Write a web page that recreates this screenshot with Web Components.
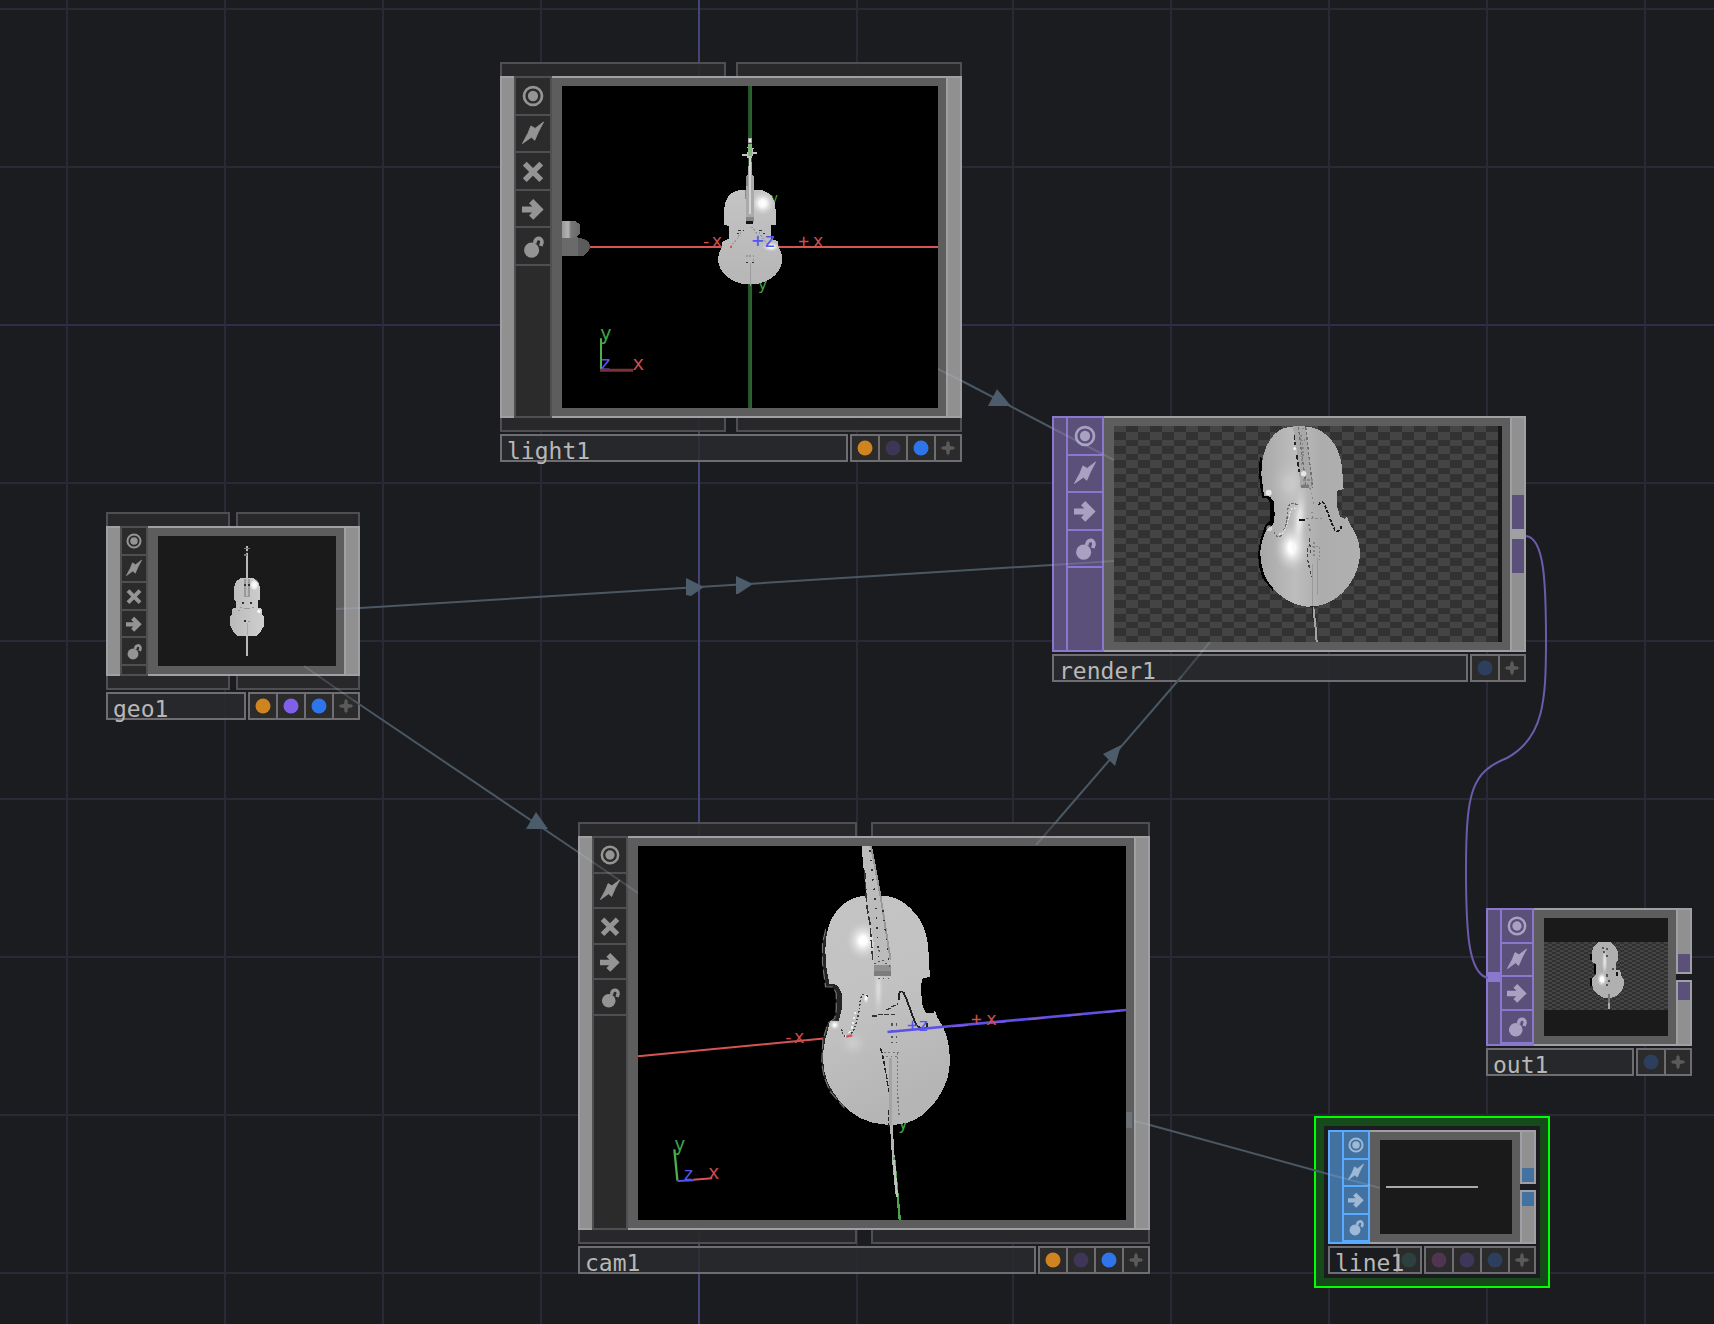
<!DOCTYPE html>
<html lang="en">
<head>
<meta charset="utf-8">
<title>Network editor</title>
<style>
html,body{margin:0;height:100%;background:#1b1c20}
body{font-family:"DejaVu Sans Mono","Liberation Mono",monospace;overflow:hidden}
</style>
</head>
<body>
<network-canvas>
  <op-node name="light1" kind="comp" tools="target bolt cross arrow lock" flags="#cf8420 #3f3556 #2e74ea" style="left:500px;top:62px;width:462px;--view-h:322px;--tool-w:34px;--tools-h:188px;--icon:22px;--gap:10px">
    <view-light></view-light>
  </op-node>
  <op-node name="geo1" kind="comp" tools="target bolt cross arrow lock" flags="#cf8420 #8060e8 #2e74ea" style="left:106px;top:512px;width:254px;--view-h:130px;--tool-w:24px;--tools-h:138px;--icon:16px;--gap:6px;--lead:4px">
    <view-geo></view-geo>
  </op-node>
  <op-node name="render1" kind="top" ports="joined" tools="target bolt arrow lock" flags="#2e3f5e" style="left:1052px;top:416px;width:474px;--view-h:216px;--tool-w:34px;--tools-h:150px;--icon:22px;--port:34px">
    <view-render></view-render>
  </op-node>
  <op-node name="cam1" kind="comp" tools="target bolt cross arrow lock" flags="#cf8420 #3f3556 #2e74ea" style="left:578px;top:822px;width:572px;--view-h:374px;--tool-w:32px;--tools-h:178px;--icon:20px;--gap:14px;--lead:2px">
    <view-cam></view-cam>
  </op-node>
  <op-node name="out1" kind="top" ports="split" input tools="target bolt arrow lock" flags="#2e3f5e" style="left:1486px;top:908px;width:206px;--view-h:118px;--tool-w:30px;--tools-h:134px;--icon:20px;--port:18px">
    <view-out></view-out>
  </op-node>
  <op-node name="line1" kind="sop" ports="split" selected tools="target bolt arrow lock" flags="#2c4040 #4f3550 #3f3759 #2e3f5e" style="left:1328px;top:1130px;width:208px;--view-h:94px;--tool-w:24px;--tools-h:110px;--icon:16px;--port:14px">
    <view-line></view-line>
  </op-node>
</network-canvas>

<script>
class NetworkCanvas extends HTMLElement {
  constructor() {
    super();
    const xs = [66,224,382,540,856,1012,1170,1328,1486,1644];
    const ys = [8,166,482,640,798,956,1114,1272];
    const grid = xs.map(x => `<rect x="${x}" y="0" width="2" height="100%"/>`).join('') +
      ys.map(y => `<rect x="0" y="${y}" width="100%" height="2"/>`).join('');
    this.attachShadow({mode:'open'}).innerHTML = `
    <style>
      :host{display:block;position:relative;min-height:100vh;background:#1b1c20;overflow:hidden}
      svg{position:absolute;inset:0;width:100%;height:100%;display:block;pointer-events:none}
    </style>
    <svg aria-hidden="true"><g fill="#292a35">${grid}</g>
      <rect x="0" y="324" width="100%" height="2" fill="#2c2e4c"/>
      <rect x="698" y="0" width="2" height="100%" fill="#444478"/></svg>
    <slot></slot>
    <svg aria-hidden="true">
      <g stroke="#4a5864" stroke-width="2" fill="none">
        <path d="M962 381L1052 428M360 608L1052 565M353 700L578 852M1056 822L1182 676M1150 1125L1328 1174"/>
      </g>
      <g stroke="#b4c8dc" stroke-opacity=".2" stroke-width="2" fill="none">
        <path d="M938 369L962 381M1052 428L1114 460M336 609L360 608M1052 565L1114 561M304 666L353 700M578 852L638 893M1036 845L1056 822M1182 676L1210 642M1134 1121L1150 1125M1328 1174L1380 1188"/>
      </g>
      <path d="M1126 1112h6v16h-6z" fill="#6c7276"/>
      <g fill="#4d5c6a">
        <path d="M997 389L1011 406H988Z"/><path d="M686 578L704 587L691 596L686 595Z"/>
        <path d="M736 576L753 584L738 594H736Z"/><path d="M536 812L548 829H526Z"/>
        <path d="M1121 745L1103 754L1115 766Z"/>
      </g>
      <path d="M1526 536C1544 538 1546 580 1546 640C1546 700 1544 738 1507 758C1472 772 1466 790 1466 870C1466 930 1468 974 1488 978" fill="none" stroke="#6c5bab" stroke-width="2"/>
    </svg>`;
  }
}

const ICONS = {
  target:'<circle cx="12" cy="12" r="9.8" fill="none" stroke="currentColor" stroke-width="3"/><circle cx="12" cy="12" r="5.6" fill="currentColor"/>',
  bolt:'<path fill="currentColor" stroke="currentColor" d="M23.500 0L14.300 7L9.700 4.300L6.500 12.300L.500 23.500L10.300 16.500L13.900 19.900L18 10.500Z"/>',
  cross:'<path fill="none" stroke="currentColor" stroke-width="6" d="M3 4L21 22M21 4L3 22"/>',
  arrow:'<path fill="none" stroke="currentColor" stroke-width="6.5" d="M0 12.500H19M10 3.500L19 12.500L10 21.500"/>',
  lock:'<circle cx="10.500" cy="16.500" r="8.200" fill="currentColor"/><path fill="none" stroke="currentColor" stroke-width="4" d="M14 9.500C13.500 2 22 2 21.800 8L20.500 12"/>'
};
const LABELS = {target:'Viewer active',bolt:'Bypass',cross:'Cook off',arrow:'Export',lock:'Lock'};

class OpTool extends HTMLElement {
  constructor() {
    super();
    const k = this.getAttribute('icon');
    this.attachShadow({mode:'open'}).innerHTML = `
    <style>
      :host{display:block;min-height:0;border-bottom:2px solid var(--line)}
      button{all:unset;display:flex;width:100%;height:100%;align-items:center;justify-content:center;color:var(--ink)}
      svg{width:var(--icon);height:var(--icon);display:block;overflow:visible}
    </style>
    <button aria-label="${LABELS[k]}"><svg viewBox="0 0 24 24">${ICONS[k]}</svg></button>`;
  }
}

class OpFlag extends HTMLElement {
  constructor() {
    super();
    const c = this.getAttribute('color');
    this.attachShadow({mode:'open'}).innerHTML = `
    <style>
      :host{display:block;box-sizing:border-box;width:28px;border:solid #6e6e72;border-width:2px 2px 2px 0;background:#2b2b2b}
      :host(:last-of-type){width:26px}
      button{all:unset;display:flex;width:100%;height:100%;align-items:center;justify-content:center}
      svg{width:16px;height:16px;display:block}
    </style>
    <button aria-label="${c ? 'Flag' : 'Add'}"><svg viewBox="0 0 16 16">${c
      ? `<circle cx="8" cy="8" r="7.5" fill="${c}"/>`
      : '<path d="M8 0L10 6L16 8L10 10L8 16L6 10L0 8L6 6Z" fill="#5a5a5a"/><path d="M8 2V14M2 8H14" stroke="#5a5a5a" stroke-width="3"/>'}</svg></button>`;
  }
}

class OpNode extends HTMLElement {
  constructor() {
    super();
    const a = n => this.getAttribute(n);
    const comp = a('kind') === 'comp', ports = a('ports');
    const theme = {
      comp:'--line:#4e4e53;--fill:#2b2b2b;--ink:#949494;--bar:#909090;--edge:#a0a0a4',
      top:'--line:#8a78cf;--fill:#5a5079;--ink:#a9a1c1;--bar:#5a5079;--edge:#8a78cf',
      sop:'--line:#5aaaff;--fill:#4472a0;--ink:#9db9d5;--bar:#4472a0;--edge:#5aaaff'
    }[a('kind')];
    const hooks = p => comp ? `<div class="hooks ${p}"><i></i><i></i></div>` : '';
    const right = ports === 'joined'
      ? '<div class="out joined"><i></i><b></b><i></i></div>'
      : ports === 'split'
        ? '<div class="split"><div class="out up"><i></i></div><div class="out down"><i></i></div></div>'
        : '<div class="out"></div>';
    this.attachShadow({mode:'open'}).innerHTML = `
    <style>
      :host{display:block;position:absolute;${theme}}
      .hooks{display:flex;gap:var(--gap);height:14px}
      .hooks i{flex:1 1 0px;box-sizing:border-box;border:2px solid #4e4e53;background:#2a2a2bee}
      .hooks i:first-child{flex-basis:var(--lead,0px)}
      .above i{border-bottom:0}.below i{border-top:0}
      .body{display:flex}
      .in{display:flex;flex-direction:column;justify-content:center;box-sizing:border-box;width:14px;border:2px solid var(--edge);border-right:0;background:var(--bar)}
      .in b{height:10px;background:var(--edge)}
      .tools{border:2px solid var(--line);width:var(--tool-w);background:var(--fill)}
      .rows{display:grid;height:var(--tools-h);grid-auto-rows:minmax(0,1fr);max-height:100%}
      .frame{flex:1;min-width:0;border:solid #a0a0a4;border-width:2px 0;background:#5d5d5d;padding:8px 8px 8px 10px}
      .view{height:var(--view-h);background:#1a1a1a;overflow:hidden}
      .split{display:flex;flex-direction:column;gap:6px}
      .out{display:flex;flex-direction:column;justify-content:center;box-sizing:border-box;width:16px;border:2px solid #a0a0a4;background:#909090}
      .out i{height:var(--port);background:var(--fill)}
      .out b{height:10px;background:#a0a0a4}
      .split .out{flex:1}.up{justify-content:flex-end}.down{justify-content:flex-start}
      .foot{display:flex;height:28px;margin-top:2px}
      .name{flex:1;min-width:0;box-sizing:border-box;border:2px solid #6e6e72;background:#2a2b2dd0;padding-left:5px;font-size:23px;line-height:30px;color:#b8b8b8;white-space:nowrap}
      .flags{display:flex;margin-left:2px;border-left:2px solid #6e6e72}
      :host([selected]){isolation:isolate}
      :host([selected])::before{content:"";position:absolute;inset:-14px;border:2px solid #0f0;background:#174a1b;z-index:-2}
      :host([selected])::after{content:"";position:absolute;inset:-4px;background:#1b1c20;z-index:-1}
      :host([selected]) .flags{margin-left:-26px}
      :host([selected]) op-flag:first-child{margin-right:2px;width:24px}
      :host([selected]) op-flag:nth-child(2){border-left:2px solid #6e6e72;width:30px}
      :host([selected]) .name{position:relative;z-index:1;background:transparent}
    </style>
    ${hooks('above')}
    <div class="body">
      <div class="in">${this.hasAttribute('input') ? '<b></b>' : ''}</div>
      <div class="tools"><div class="rows">${a('tools').split(' ').map(t => `<op-tool icon="${t}"></op-tool>`).join('')}</div></div>
      <div class="frame"><div class="view"><slot></slot></div></div>
      ${right}
    </div>
    ${hooks('below')}
    <div class="foot">
      <div class="name">${a('name')}</div>
      <div class="flags">${a('flags').split(' ').map(c => `<op-flag color="${c}"></op-flag>`).join('')}<op-flag></op-flag></div>
    </div>`;
  }
}

const view = (tag, box, art) => customElements.define(tag, class extends HTMLElement {
  constructor() {
    super();
    this.attachShadow({mode:'open'}).innerHTML = `
    <style>:host{display:block;height:100%}svg{display:block;width:100%;height:100%}
    text{font-family:"DejaVu Sans Mono",monospace}
    .r{fill:#cc4e4e}.g{fill:#3fa343}.b{fill:#5555f0}</style>
    <svg viewBox="${box}" preserveAspectRatio="none">${art}</svg>`;
  }
});

view('view-light', '216 108 1128 966', `
  <defs><radialGradient id="h"><stop offset="0" stop-color="#fff"/><stop offset=".3" stop-color="#f8f8f8"/><stop offset="1" stop-color="#c8c8c8" stop-opacity="0"/></radialGradient>
  <linearGradient id="w" x2="0" y2="1"><stop offset="0" stop-color="#c4c4c4"/><stop offset="1" stop-color="#b6b6b6"/></linearGradient>
  <linearGradient id="c"><stop offset="0" stop-color="#999"/><stop offset=".35" stop-color="#b4b4b4"/><stop offset=".5" stop-color="#777"/><stop offset="1" stop-color="#6a6a6a"/></linearGradient></defs>
  <rect x="216" y="108" width="1128" height="966" fill="#000"/>
  <rect x="774" y="108" width="12" height="966" fill="#2c6230"/><rect x="774" y="108" width="5" height="966" fill="#255228"/>
  <rect x="216" y="588" width="1128" height="6" fill="#d75454"/>
  <text class="g" x="840" y="460" font-size="40">y</text><text class="g" x="803" y="721" font-size="48">y</text>
  <g shape-rendering="crispEdges">
  <circle cx="277" cy="590" r="23" fill="#4c4c4c"/><path d="M256 565h20l22 14v20l-16 18h-26z" fill="#5b5b5b"/>
  <rect x="216" y="562" width="48" height="56" fill="#6a6a6a"/><path d="M216 512h40l14 12v26l-14 13h-40z" fill="url(#c)"/>
  <path d="M748 420C720 424 702 448 702 480V525L718 528V567L706 570L696 578L697 590A96 76 0 1 0 864 590V574L842 566V527L857 524V480C857 448 840 424 812 420Z" fill="url(#w)"/></g>
  <circle cx="818" cy="460" r="38" fill="url(#h)"/><ellipse cx="843" cy="590" rx="28" ry="16" fill="url(#h)"/>
  <g shape-rendering="crispEdges"><path d="M764 420v24l5 6V420Z" fill="#8a8a8a"/>
  <path d="M777 322h7L786 374L792 378V520H768V378L774 374Z" fill="#aaa"/><path d="M777 322h7v170h-8z" fill="#d3d3d3"/><path d="M768 378h6v30h-6zM768 500h24v12h-24z" fill="#888"/>
  <path d="M768 512h22v9h-22z" fill="#151515"/><path d="M757 313h13v-6h5v-14h-5v-3h8v3h13v5h-3v8h14v5h-12v6h-4v8h-14v-8h-15z" fill="#c4c4c4"/>
  <rect x="774" y="282" width="12" height="37" fill="#83b981"/><path d="M774 264h12v14h-12z" fill="#aaa"/><path d="M777 266h6v9h-6z" fill="#eee"/>
  <path d="M744 541h9M758 541h5M806 541h10M768 637h7M785 637h7M741 550h6M819 550h6" stroke="#303030" stroke-width="5"/>
  <path d="M752 545l-9 20l-20 22M808 545l10 20l16 18M768 618h22v14M784 530l18 22" stroke="#999" stroke-width="4" stroke-dasharray="6 4" fill="none"/>
  <path d="M780 640V708" stroke="#9c9c9c" stroke-width="3"/><rect x="720" y="588" width="6" height="6" fill="#d75454"/></g>
  <text class="r" x="632" y="590" font-size="54">-x</text><text class="r" x="925" y="590" font-size="54">+</text><text class="r" x="968" y="590" font-size="54">x</text><text class="b" x="785" y="592" font-size="60">+z</text>
  <text class="g" x="329" y="871" font-size="60">y</text><text class="b" x="328" y="960" font-size="60">z</text><text class="r" x="427" y="960" font-size="60">x</text>
  <path d="M333 865V960" stroke="#4fae50" stroke-width="6"/><path d="M330 961H430" stroke="#7b3034" stroke-width="9"/>`);

view('view-geo', '189 108 534 390', `
  <defs><radialGradient id="h"><stop offset="0" stop-color="#fff"/><stop offset=".5" stop-color="#f0f0f0"/><stop offset="1" stop-color="#c2c2c2" stop-opacity="0"/></radialGradient>
  <linearGradient id="w"><stop offset="0" stop-color="#bababa"/><stop offset="1" stop-color="#cfcfcf"/></linearGradient></defs>
  <g shape-rendering="crispEdges"><path d="M456 138V240M456 400V468" stroke="#b9b9b9" stroke-width="6"/><path d="M447 146h18M447 165h10" stroke="#777" stroke-width="4"/><path d="M453 156h6" stroke="#333" stroke-width="4"/>
  <path d="M437 234H476L492 250L495 264V300H489V324L500 326V340L507 352V378L495 398L483 408H429L414 394L405 376V350L412 340V326L423 324V303L417 298V262L424 244Z" fill="url(#w)"/></g>
  <ellipse cx="478" cy="255" rx="16" ry="20" fill="url(#h)"/><ellipse cx="492" cy="334" rx="9" ry="8" fill="url(#h)"/>
  <g shape-rendering="crispEdges"><path d="M447 236h19v56h-19z" fill="#9a9a9a"/><path d="M453 234h6v54h-6z" fill="#bdbdbd"/>
  <path d="M447 255h5M459 255h5M441 309h6M465 309h6M447 363h6" stroke="#333" stroke-width="5"/><path d="M435 321h6M471 321h6M447 326h18M459 363h6M429 330h6" stroke="#999" stroke-width="3"/><path d="M456 368v38" stroke="#aaa" stroke-width="3"/></g>`);

view('view-render', '222 63 1164 648', `
  <defs><pattern id="k" x="222" y="63" width="72" height="42" patternUnits="userSpaceOnUse"><rect width="72" height="42" fill="#444"/><path d="M36 0h36v18H36zM0 18h36v24H0z" fill="#323232"/></pattern>
  <radialGradient id="h"><stop offset="0" stop-color="#fff"/><stop offset=".2" stop-color="#fff"/><stop offset="1" stop-color="#c4c4c4" stop-opacity="0"/></radialGradient>
  <linearGradient id="w"><stop offset="0" stop-color="#a8a8a8"/><stop offset=".35" stop-color="#bdbdbd"/><stop offset=".6" stop-color="#adadad"/><stop offset="1" stop-color="#b0b0b0"/></linearGradient></defs>
  <rect x="222" y="63" width="1164" height="648" fill="#191919"/><rect x="222" y="63" width="1152" height="648" fill="url(#k)" shape-rendering="crispEdges"/>
  <g shape-rendering="crispEdges">
  <path d="M663 150L657 180V205L660 240L667 278L684 281L691 295V345L676 360L662 400L655 440L656 480L668 520L700 560L710 400L705 270L680 250Z" fill="#000"/>
  <path d="M750 65H810C850 72 882 106 894 138C908 172 908 205 908 232L911 252L890 258V300L900 335L914 342L920 334L927 350C942 382 960 400 960 450C956 510 920 560 880 585C855 600 830 606 800 605C750 600 710 570 684 530C664 495 659 460 662 430C668 395 676 378 682 372L700 358L704 330L702 290L690 275L672 272L664 210C664 160 672 135 690 104C706 80 728 68 750 65Z" fill="url(#w)"/></g>
  <ellipse cx="756" cy="428" rx="54" ry="76" fill="url(#h)"/><ellipse cx="778" cy="345" rx="26" ry="120" fill="url(#h)" opacity=".6" transform="rotate(5 776 350)"/><ellipse cx="748" cy="236" rx="60" ry="80" fill="url(#h)" opacity=".2"/><circle cx="686" cy="263" r="9" fill="#fff" opacity=".7"/><circle cx="688" cy="370" r="9" fill="#fff" opacity=".5"/>
  <g shape-rendering="crispEdges" fill="none">
  <path d="M758 63H796L820 250H782L770 130Z" fill="#a8a8a8"/>
  <path d="M763 90L765 120M770 150L778 200" stroke="#222" stroke-width="5" stroke-dasharray="14 7"/>
  <path d="M775 66L798 240M797 66L818 250" stroke="#707070" stroke-width="4" stroke-dasharray="9 6"/>
  <path d="M782 90L790 130L784 180M786 70h12M780 105h16M785 150h14M790 225h30M788 240h28" stroke="#888" stroke-width="5" stroke-dasharray="7 5"/><path d="M784 245h24" stroke="#7a7a7a" stroke-width="10"/>
  <path d="M810 250L822 300M816 320L820 345" stroke="#888" stroke-width="4" stroke-dasharray="5 9"/>
  <path d="M772 300C748 286 742 306 742 330C740 365 728 386 720 394C708 398 702 388 704 378" stroke="#6a6a6a" stroke-width="4" stroke-dasharray="7 5"/><path d="M768 312C752 298 748 330 744 350C736 380 728 386 716 388" stroke="#ddd" stroke-width="4" stroke-dasharray="6 5"/>
  <path d="M836 300C844 286 850 290 856 304C866 330 874 354 884 374C894 382 904 376 904 362" stroke="#181818" stroke-width="5" stroke-dasharray="9 5"/>
  <path d="M776 345h18" stroke="#111" stroke-width="7"/><path d="M798 341h48M806 356l6 28" stroke="#888" stroke-width="4" stroke-dasharray="8 6"/>
  <path d="M802 430V460L814 515M808 400L812 450" stroke="#444" stroke-width="4" stroke-dasharray="10 7"/><path d="M804 424h34v40M822 410v50" stroke="#888" stroke-width="4" stroke-dasharray="6 6"/>
  <path d="M816 470L818 605M832 460L834 570" stroke="#999" stroke-width="3"/><path d="M810 604h10" stroke="#222" stroke-width="5"/><path d="M820 606L826 660L830 711" stroke="#a5a5a5" stroke-width="6"/><path d="M817 606v30" stroke="#222" stroke-width="3"/></g>
  <circle cx="791" cy="206" r="8" fill="#e6e6e6"/><circle cx="764" cy="131" r="4" fill="#fff"/>`);

view('view-cam', '0 0 488 374', `
  <defs><radialGradient id="h"><stop offset="0" stop-color="#fff"/><stop offset=".2" stop-color="#fff"/><stop offset="1" stop-color="#ccc" stop-opacity="0"/></radialGradient>
  <linearGradient id="w" x2=".3" y2="1"><stop offset="0" stop-color="#c4c4c4"/><stop offset=".5" stop-color="#c2c2c2"/><stop offset="1" stop-color="#b5b5b5"/></linearGradient></defs>
  <rect width="488" height="374" fill="#000"/>
  <text class="g" x="260" y="283" font-size="17">y</text>
  <g transform="scale(.3827 .3333) translate(-178 -108)">
  <path d="M178 739L670 685" stroke="#d75454" stroke-width="6"/>
  <g shape-rendering="crispEdges">
  <path d="M668 360L660 400V460L668 530L688 531L696 550V600L692 625L674 640L661 690L658 760L664 800L680 845L716 892L720 500Z" fill="#252525" stroke="#777" stroke-width="3" stroke-dasharray="30 10"/>
  <path d="M764 258H825C865 260 895 298 912 325C932 360 938 400 938 450L941 500L920 506L917 540L922 590L932 610L950 608L954 600L960 622C984 660 993 700 993 752C993 820 960 880 920 916C895 938 860 948 825 944C775 942 735 915 705 874C675 830 663 800 661 745C662 700 672 670 680 632L702 634L710 600V550L698 524L678 522L670 470C664 400 670 360 684 325C702 285 735 262 764 258Z" fill="url(#w)"/></g>
  <ellipse cx="766" cy="392" rx="46" ry="60" fill="url(#h)"/><ellipse cx="806" cy="540" rx="14" ry="90" fill="url(#h)" opacity=".4"/><ellipse cx="740" cy="700" rx="40" ry="44" fill="url(#h)" opacity=".2"/><ellipse cx="692" cy="645" rx="14" ry="16" fill="url(#h)"/><ellipse cx="774" cy="565" rx="8" ry="18" fill="url(#h)"/>
  <g shape-rendering="crispEdges" fill="none">
  <path d="M762 108H787L812 260L838 450V497H794V400L774 258Z" fill="#bcbcbc"/><path d="M787 108L812 260L838 450" stroke="#999" stroke-width="5"/>
  <path d="M770 180L776 290L784 340L792 460" stroke="#333" stroke-width="4" stroke-dasharray="26 9"/><path d="M784 120L800 290L806 440M818 300L836 480" stroke="#333" stroke-width="4" stroke-dasharray="5 24"/>
  <path d="M794 465h46v32h-46z" fill="#909090"/><path d="M794 484h46v13h-46z" fill="#7c7c7c"/><path d="M796 462l20-12l22 20M803 410l8 20M806 506h34" stroke="#555" stroke-width="4" stroke-dasharray="4 8"/>
  <path d="M778 560C768 545 760 556 758 580C754 620 746 660 732 676C720 686 710 675 710 655" stroke="#444" stroke-width="4" stroke-dasharray="5 6"/><path d="M746 605L736 660L716 684" stroke="#eee" stroke-width="4" stroke-dasharray="7 8"/>
  <path d="M860 570C858 545 864 540 872 548C884 575 896 625 906 646L918 656L932 654V640" stroke="#222" stroke-width="5"/>
  <path d="M790 618h14M806 614h48M828 600l30-20" stroke="#333" stroke-width="4" stroke-dasharray="12 4"/><path d="M842 640V700M854 640v60" stroke="#555" stroke-width="4" stroke-dasharray="7 12"/>
  <path d="M812 715L818 740L826 790L834 850M834 900V950" stroke="#222" stroke-width="4" stroke-dasharray="14 6"/><path d="M820 728h40M826 740h34M856 730V850L860 915" stroke="#777" stroke-width="4" stroke-dasharray="5 7"/>
  <path d="M838 745v200" stroke="#a4a4a4" stroke-width="7"/><path d="M840 945L846 1060L855 1160" stroke="#b5b5b5" stroke-width="7"/><path d="M847 1040L862 1230" stroke="#4ba34c" stroke-width="6"/><path d="M847 1050L855 1160" stroke="#b9c8b9" stroke-width="5"/>
  </g><path d="M722 680L738 676" stroke="#d75454" stroke-width="7"/>
  <path d="M830 666L1453 600" stroke="#5e50e6" stroke-width="8"/><path d="M1000 650L1453 601" stroke="#8a58c8" stroke-width="4" stroke-dasharray="40 60"/>
  <path d="M273 1018L281 1112" stroke="#4fae50" stroke-width="6"/><path d="M322 1109L372 1105" stroke="#d75454" stroke-width="6"/><path d="M281 1113L324 1111" stroke="#5353ea" stroke-width="6"/></g>
  <text class="r" x="145" y="197" font-size="18">-x</text><text class="r" x="333" y="179" font-size="18">+</text><text class="r" x="348" y="179" font-size="18">x</text><text class="b" x="269" y="185" font-size="18">+z</text>
  <text class="g" x="36" y="305" font-size="19">y</text><text class="b" x="45" y="334" font-size="18">z</text><text class="r" x="70" y="333" font-size="19">x</text>`);

view('view-out', '282 84 372 354', `
  <defs><pattern id="k" x="282" y="156" width="24" height="12" patternUnits="userSpaceOnUse"><rect width="24" height="12" fill="#444"/><path d="M12 0h12v6H12zM0 6h12v6H0z" fill="#313131"/></pattern>
  <radialGradient id="h"><stop offset="0" stop-color="#fff"/><stop offset=".3" stop-color="#fff"/><stop offset="1" stop-color="#bbb" stop-opacity="0"/></radialGradient></defs>
  <rect x="282" y="156" width="372" height="204" fill="url(#k)" shape-rendering="crispEdges"/>
  <g shape-rendering="crispEdges"><path d="M420 192h8v18h-8zM432 222h8v30h-8zM421 264h6v24h-6z" fill="#000"/>
  <path d="M444 156H480L495 168L504 186V210L498 218V240H510L514 258L522 270V286L514 304L498 318L480 324H462L444 314L430 300L426 280V264L438 252V222L426 216V186L432 168Z" fill="#b0b0b0"/></g>
  <ellipse cx="456" cy="268" rx="17" ry="24" fill="url(#h)"/><ellipse cx="464" cy="215" rx="9" ry="48" fill="url(#h)" opacity=".6"/>
  <g shape-rendering="crispEdges" fill="#555"><path d="M456 170h6v6h-6zM468 174h6v6h-6zM460 182h6v6h-6zM468 194h6v6h-6zM486 234h6v6h-6zM468 252h6v8h-6zM474 270h6v6h-6zM468 282h6v6h-6z"/><path d="M498 246h6v12h-6z" fill="#111"/><path d="M474 312h5v28h-5z" fill="#777"/><path d="M474 340h6v16h-6z" fill="#aaa"/></g>`);

view('view-line', '240 120 396 282', `<rect x="258" y="258" width="276" height="6" fill="#aaa"/>`);

customElements.define('op-tool', OpTool);
customElements.define('op-flag', OpFlag);
customElements.define('op-node', OpNode);
customElements.define('network-canvas', NetworkCanvas);
</script>
</body>
</html>
